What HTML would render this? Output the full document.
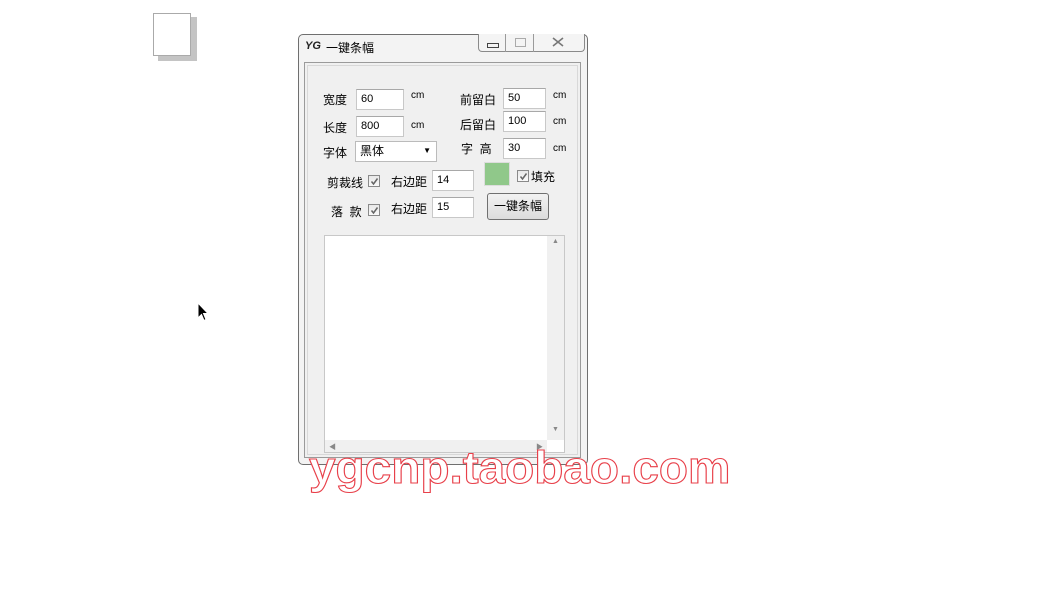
<!DOCTYPE html>
<html><head><meta charset="utf-8"><style>
body{margin:0;width:1040px;height:590px;background:#fff;position:relative;overflow:hidden;font-family:"Liberation Sans","Noto Sans CJK SC",sans-serif;}
.a{position:absolute}
.lbl{position:absolute;font-size:12px;color:#000;white-space:nowrap}
.inp{position:absolute;background:#fff;border:1px solid #c8c8c8;border-top-color:#a8a8a8;font-size:11px;line-height:18px;padding-left:4px;box-sizing:border-box;height:21px}
.cm{position:absolute;font-size:10px}
.cb{position:absolute;width:12px;height:12px;border:1px solid #8a8a8a;background:linear-gradient(#e8e8e8,#fafafa);box-sizing:border-box}
.cb svg{position:absolute;left:1px;top:1px}
</style></head><body>
<div class="a" style="left:158px;top:17px;width:39px;height:44px;background:#c4c4c4"></div>
<div class="a" style="left:153px;top:13px;width:38px;height:43px;background:#fff;border:1px solid #aaa;box-sizing:border-box"></div>
<svg class="a" style="left:197px;top:302px" width="12" height="20"><path d="M1 1 L1 16 L4.5 12.5 L7 18.5 L9 17.5 L6.5 11.5 L11 11.5 Z" fill="#000" stroke="#fff" stroke-width="1"/></svg>
<div class="a" style="left:298px;top:34px;width:290px;height:431px;background:#f3f3f3;border:1px solid #6f6f6f;border-radius:5px;box-sizing:border-box"></div>
<div class="a" style="left:305px;top:40px;font-size:11px;font-weight:bold;font-style:italic;color:#222">YG</div>
<div class="lbl" style="left:326px;top:39px">一键条幅</div>
<div class="a" style="left:478px;top:34px;width:107px;height:18px;border:1px solid #8a8a8a;border-top:none;border-radius:0 0 4px 4px;background:#f4f4f4;box-sizing:border-box"></div>
<div class="a" style="left:505px;top:34px;width:1px;height:18px;background:#9a9a9a"></div>
<div class="a" style="left:533px;top:34px;width:1px;height:18px;background:#9a9a9a"></div>
<div class="a" style="left:487px;top:43px;width:10px;height:3px;border:1px solid #444"></div>
<div class="a" style="left:515px;top:38px;width:9px;height:7px;border:1px solid #aaa"></div>
<svg class="a" style="left:552px;top:37px" width="12" height="10"><path d="M1 1 L11 9 M11 1 L1 9" stroke="#777" stroke-width="1.6"/></svg>
<div class="a" style="left:304px;top:62px;width:277px;height:396px;background:#f0f0f0;border:1px solid #9a9a9a;box-sizing:border-box"></div>
<div class="a" style="left:307px;top:65px;width:271px;height:390px;border:1px solid #d8d8d8;box-sizing:border-box"></div>

<div class="lbl" style="left:323px;top:91px">宽度</div><div class="inp" style="left:356px;top:89px;width:48px">60</div><div class="cm" style="left:411px;top:90px">cm</div>
<div class="lbl" style="left:323px;top:119px">长度</div><div class="inp" style="left:356px;top:116px;width:48px">800</div><div class="cm" style="left:411px;top:120px">cm</div>
<div class="lbl" style="left:323px;top:144px">字体</div>
<div class="inp" style="left:355px;top:141px;width:82px;font-size:12px;border-color:#bbb">黑体<span style="position:absolute;right:5px;top:0;font-size:8px">▼</span></div>
<div class="lbl" style="left:460px;top:91px">前留白</div><div class="inp" style="left:503px;top:88px;width:43px">50</div><div class="cm" style="left:553px;top:90px">cm</div>
<div class="lbl" style="left:460px;top:116px">后留白</div><div class="inp" style="left:503px;top:111px;width:43px">100</div><div class="cm" style="left:553px;top:116px">cm</div>
<div class="lbl" style="left:461px;top:140px">字&nbsp;&nbsp;高</div><div class="inp" style="left:503px;top:138px;width:43px">30</div><div class="cm" style="left:553px;top:143px">cm</div>

<div class="lbl" style="left:327px;top:174px">剪裁线</div><div class="cb" style="left:368px;top:175px"><svg width="9" height="9"><path d="M1.5 4.5 L3.5 7 L7.5 1.5" stroke="#666" stroke-width="1.5" fill="none"/></svg></div>
<div class="lbl" style="left:391px;top:173px">右边距</div><div class="inp" style="left:432px;top:170px;width:42px">14</div>
<div class="lbl" style="left:331px;top:203px">落&nbsp;&nbsp;款</div><div class="cb" style="left:368px;top:204px"><svg width="9" height="9"><path d="M1.5 4.5 L3.5 7 L7.5 1.5" stroke="#666" stroke-width="1.5" fill="none"/></svg></div>
<div class="lbl" style="left:391px;top:200px">右边距</div><div class="inp" style="left:432px;top:197px;width:42px">15</div>
<div class="a" style="left:484px;top:162px;width:26px;height:24px;background:#90c88a;border:1px solid #ddd;box-sizing:border-box"></div>
<div class="cb" style="left:517px;top:170px"><svg width="9" height="9"><path d="M1.5 4.5 L3.5 7 L7.5 1.5" stroke="#666" stroke-width="1.5" fill="none"/></svg></div><div class="lbl" style="left:531px;top:168px">填充</div>
<div class="a" style="left:487px;top:193px;width:62px;height:27px;border:1px solid #707070;border-radius:3px;background:linear-gradient(#f2f2f2,#dcdcdc);box-sizing:border-box;font-size:12px;text-align:center;line-height:25px">一键条幅</div>

<div class="a" style="left:324px;top:235px;width:241px;height:218px;background:#fff;border:1px solid #c8c8c8;box-sizing:border-box"></div>
<div class="a" style="left:547px;top:236px;width:17px;height:204px;background:#f0f0f0"></div>
<div class="a" style="left:325px;top:440px;width:222px;height:12px;background:#f0f0f0"></div>
<div class="a" style="left:552px;top:238px;font-size:7px;color:#888">▲</div>
<div class="a" style="left:552px;top:426px;font-size:7px;color:#888">▼</div>
<div class="a" style="left:329px;top:442px;font-size:7px;color:#888">◀</div>
<div class="a" style="left:536px;top:442px;font-size:7px;color:#888">▶</div>

<div class="a" style="left:309px;top:442px;font-size:45px;font-weight:bold;font-family:'Liberation Sans',sans-serif;color:#fff;-webkit-text-stroke:1.1px #e8404a;white-space:nowrap;transform-origin:0 0;transform:scaleX(1.06)">ygcnp.taobao.com</div>
</body></html>
